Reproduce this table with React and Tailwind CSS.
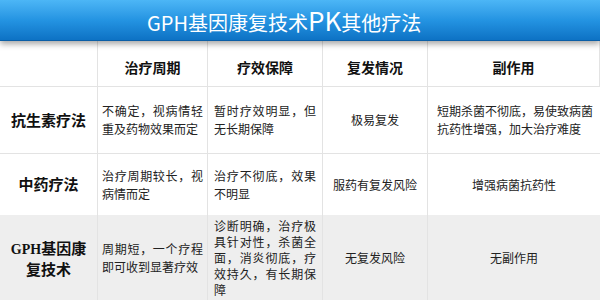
const font = { fontFamily: '"Noto Sans CJK SC", "Noto Sans", sans-serif' };

const cols = 'grid grid-cols-[98px_110px_115px_105px_1fr]';
const cell = 'flex items-center border-r border-[#e3e3e3] text-[12px] leading-[18px] text-[#222]';

const rows = [
  {
    name: '抗生素疗法',
    h: 'h-[67px] border-b border-[#e3e3e3]',
    bg: '',
    cycle: '不确定，视病情轻重及药物效果而定',
    effect: '暂时疗效明显，但无长期保障',
    relapse: '极易复发',
    side: '短期杀菌不彻底，易使致病菌抗药性增强，加大治疗难度',
    sideLeft: true,
  },
  {
    name: '中药疗法',
    h: 'h-[61px]',
    bg: '',
    cycle: '治疗周期较长，视病情而定',
    effect: '治疗不彻底，效果不明显',
    relapse: '服药有复发风险',
    side: '增强病菌抗药性',
  },
  {
    name: 'GPH基因康复技术',
    h: 'h-[85px]',
    bg: 'bg-[#eeeeee]',
    cycle: '周期短，一个疗程即可收到显著疗效',
    effect: '诊断明确，治疗极具针对性，杀菌全面，消炎彻底，疗效持久，有长期保障',
    effectTight: true,
    relapse: '无复发风险',
    side: '无副作用',
  },
];

function RowName({ name }) {
  if (name.startsWith('GPH')) {
    return (
      <div className="text-center text-[15px] font-bold leading-[19px]">
        <span style={{ fontFamily: '"Liberation Serif", serif' }} className="text-[14px]">GPH</span>基因康
        <br />
        复技术
      </div>
    );
  }
  return <div className="text-[15px] font-bold">{name}</div>;
}

export default function App() {
  return (
    <div className="h-[300px] w-[600px] overflow-hidden bg-white" style={font}>
      {/* Title bar */}
      <div className="relative z-10 flex h-[41px] items-center border-b border-[#0a5ea6] bg-gradient-to-b from-[#4cb6f6] via-[#2494e2] to-[#0d72c4] pl-[147px] shadow-[0_3px_6px_rgba(0,0,0,0.35)]">
        <span className="text-[20px] leading-none text-white">
          GPH基因康复技术<span className="text-[26px]">PK</span>其他疗法
        </span>
      </div>

      {/* Table head */}
      <div className={`${cols} h-[46px] border-b border-[#e3e3e3]`}>
        <div className="border-r border-[#e3e3e3]" />
        {['治疗周期', '疗效保障', '复发情况', '副作用'].map((t) => (
          <div
            key={t}
            className="flex items-center justify-center border-r border-[#e3e3e3] pt-[7px] text-[14px] font-bold text-[#111]"
          >
            {t}
          </div>
        ))}
      </div>

      {rows.map((r) => (
        <div key={r.name} className={`${cols} ${r.h} ${r.bg}`}>
          <div className="flex items-center justify-center border-r border-[#e3e3e3] text-[#111]">
            <RowName name={r.name} />
          </div>
          <div className={`${cell} px-[4px]`}>
            <p className="w-full text-justify">{r.cycle}</p>
          </div>
          <div className={`${cell} px-[6px]`}>
            <p className={`w-full text-justify ${r.effectTight ? 'leading-[16px]' : ''}`}>{r.effect}</p>
          </div>
          <div className={`${cell} justify-center`}>{r.relapse}</div>
          <div className={`${cell} border-r-0 ${r.sideLeft ? 'pl-[9px] pr-[6px]' : 'justify-center'}`}>
            {r.side}
          </div>
        </div>
      ))}
    </div>
  );
}
